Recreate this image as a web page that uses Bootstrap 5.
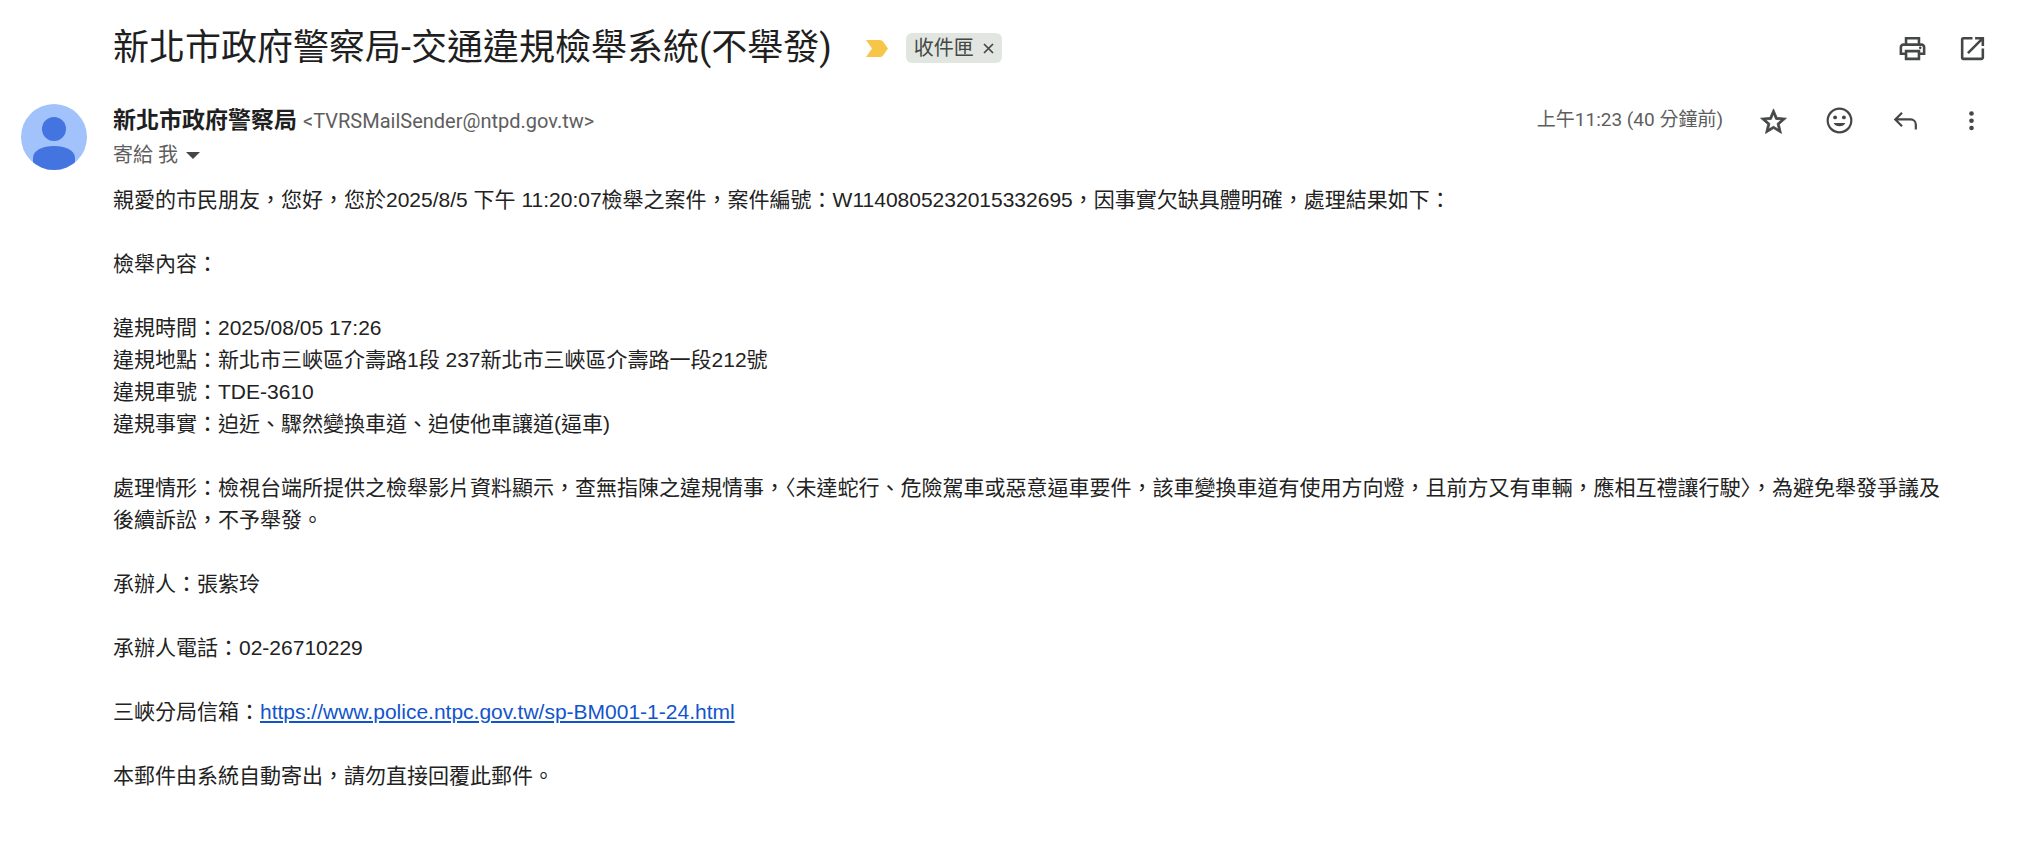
<!DOCTYPE html>
<html lang="zh-Hant">
<head>
<meta charset="utf-8">
<meta name="viewport" content="width=device-width, initial-scale=1">
<title>新北市政府警察局-交通違規檢舉系統(不舉發)</title>
<link href="https://cdn.jsdelivr.net/npm/bootstrap@5.3.0/dist/css/bootstrap.min.css" rel="stylesheet">
<style>
  body { color: #1f1f1f; background: #fff; font-family: Roboto, "Noto Sans CJK TC", sans-serif; }
  .subject-row { padding: 22px 35px 0 113px; }
  .subject { font-size: 36px; line-height: 52px; font-weight: 400; }
  .subject-labels { gap: 18px; margin-left: 34px; }
  .label-chip { background: #e1e6e0; color: #444746; border-radius: 6px; height: 30px; padding: 0 8px; gap: 9px; font-size: 20px; line-height: 30px; }
  .icon-btn { width: 32px; height: 32px; padding: 0; border: 0; color: #444746; display: flex; align-items: center; justify-content: center; }
  .icon-btn svg { width: 31px; height: 31px; fill: currentColor; }
  .subject-actions { gap: 28px; padding-top: 10px; }
  .meta-row { padding: 30px 36px 0 21px; gap: 26px; }
  .avatar { width: 66px; height: 66px; display: block; }
  .sender { font-size: 23px; line-height: 32px; font-weight: 700; }
  .sender-line { gap: 6px; }
  .muted-text { color: #5e5e5e; font-size: 20px; line-height: 34px; }
  .sent-time { font-size: 19px; }
  .meta-actions { gap: 34px; height: 32px; }
  .message { padding: 12px 64px 40px 113px; font: 21px/32px "Liberation Sans", "Noto Sans CJK TC", sans-serif; color: #222; }
  .message p { margin-bottom: 32px; }
  .message a { color: #15c; }
</style>
</head>
<body>
<main>
  <header class="subject-row d-flex align-items-start justify-content-between">
    <div class="d-flex align-items-center">
      <h1 class="subject mb-0">新北市政府警察局-交通違規檢舉系統(不舉發)</h1>
      <div class="subject-labels d-flex align-items-center">
        <svg width="22" height="17" viewBox="0 0 22 17" aria-hidden="true"><path fill="#f7c548" d="M0 0h14q2 0 3 1.500l5 7-5 7q-1 1.500-3 1.500H0l6-8.500z"/></svg>
        <span class="label-chip d-flex align-items-center">收件匣
          <button class="btn p-0 border-0 d-flex" aria-label="移除標籤"><svg width="11" height="11" viewBox="0 0 11 11" stroke="#444746" stroke-width="1.700"><path d="M1 1l9 9M10 1L1 10"/></svg></button>
        </span>
      </div>
    </div>
    <div class="subject-actions d-flex">
      <button class="btn icon-btn" aria-label="列印"><svg viewBox="0 0 24 24"><path d="M19 8h-1V3H6v5H5c-1.660 0-3 1.340-3 3v6h4v4h12v-4h4v-6c0-1.660-1.340-3-3-3zM8 5h8v3H8V5zm8 14H8v-4h8v4zm2-4v-2H6v2H4v-4c0-.55.45-1 1-1h14c.55 0 1 .45 1 1v4h-2z"/><circle cx="18" cy="11.500" r="1"/></svg></button>
      <button class="btn icon-btn" aria-label="在新視窗開啟"><svg viewBox="0 0 24 24"><path d="M19 19H5V5h7V3H5a2 2 0 0 0-2 2v14a2 2 0 0 0 2 2h14c1.100 0 2-.9 2-2v-7h-2v7zM14 3v2h3.590l-9.830 9.830 1.410 1.410L19 6.410V10h2V3h-7z"/></svg></button>
    </div>
  </header>

  <section class="meta-row d-flex align-items-start">
    <svg class="avatar flex-shrink-0" viewBox="0 0 66 66" role="img" aria-label="寄件者">
      <clipPath id="face"><circle cx="33" cy="33" r="33"/></clipPath>
      <circle cx="33" cy="33" r="33" fill="#a1c2fa"/>
      <circle cx="33" cy="25" r="12" fill="#4374e0"/>
      <path clip-path="url(#face)" fill="#4374e0" d="M12 66V54C12 46 22 42 33 42s21 4 21 12v12z"/>
    </svg>
    <div class="flex-grow-1">
      <div class="d-flex justify-content-between">
        <div class="sender-line d-flex align-items-center text-nowrap">
          <span class="sender">新北市政府警察局</span>
          <span class="muted-text">&lt;TVRSMailSender@ntpd.gov.tw&gt;</span>
        </div>
        <div class="meta-actions d-flex align-items-center">
          <time class="muted-text sent-time">上午11:23 (40 分鐘前)</time>
          <button class="btn icon-btn" aria-label="加星號"><svg viewBox="0 0 24 24"><path stroke="currentColor" stroke-width=".6" d="M22 10.240l-7.190-.62L12 3 9.190 9.630 2 10.240l5.460 4.730L5.820 22 12 18.270 18.180 22l-1.630-7.030L22 10.240zM12 16.400l-3.760 2.270 1-4.280-3.320-2.880 4.380-.38L12 7.100l1.710 4.040 4.380.38-3.320 2.880 1 4.280L12 16.400z"/></svg></button>
          <button class="btn icon-btn" aria-label="新增回應"><svg viewBox="0 0 24 24"><path d="M12 2a10 10 0 1 0 0 20 10 10 0 0 0 0-20zm0 18.300a8.300 8.300 0 1 1 0-16.600 8.300 8.300 0 0 1 0 16.600z"/><circle cx="8.600" cy="9.600" r="1.500"/><circle cx="15.400" cy="9.600" r="1.500"/><path d="M7.500 14h9c-.7 1.600-2.400 2.500-4.500 2.500s-3.800-.9-4.500-2.500z"/></svg></button>
          <button class="btn icon-btn" aria-label="回覆"><svg viewBox="0 0 24 24"><path fill="none" stroke="currentColor" stroke-width="1.700" d="M9.300 6L4.100 11.200l5.200 5.200M4.100 11.200H16a4 4 0 0 1 4 4V19"/></svg></button>
          <button class="btn icon-btn" aria-label="更多"><svg viewBox="0 0 24 24"><circle cx="12" cy="6.600" r="1.800"/><circle cx="12" cy="12.200" r="1.800"/><circle cx="12" cy="17.800" r="1.800"/></svg></button>
        </div>
      </div>
      <button class="btn border-0 p-0 d-flex align-items-center muted-text">寄給 我
        <svg class="ms-2" width="14" height="7" viewBox="0 0 14 7" aria-hidden="true"><path fill="#444746" d="M0 0h14L7 7z"/></svg>
      </button>
    </div>
  </section>

  <article class="message">
    <p>親愛的市民朋友，您好，您於2025/8/5 下午 11:20:07檢舉之案件，案件編號：W1140805232015332695，因事實欠缺具體明確，處理結果如下：</p>
    <p>檢舉內容：</p>
    <p>違規時間：2025/08/05 17:26<br>違規地點：新北市三峽區介壽路1段 237新北市三峽區介壽路一段212號<br>違規車號：TDE-3610<br>違規事實：迫近、驟然變換車道、迫使他車讓道(逼車)</p>
    <p>處理情形：檢視台端所提供之檢舉影片資料顯示，查無指陳之違規情事，〈未達蛇行、危險駕車或惡意逼車要件，該車變換車道有使用方向燈，且前方又有車輛，應相互禮讓行駛〉，為避免舉發爭議及後續訴訟，不予舉發。</p>
    <p>承辦人：張紫玲</p>
    <p>承辦人電話：02-26710229</p>
    <p>三峽分局信箱：<a href="https://www.police.ntpc.gov.tw/sp-BM001-1-24.html">https://www.police.ntpc.gov.tw/sp-BM001-1-24.html</a></p>
    <p class="mb-0">本郵件由系統自動寄出，請勿直接回覆此郵件。</p>
  </article>
</main>
<script src="https://cdn.jsdelivr.net/npm/bootstrap@5.3.0/dist/js/bootstrap.bundle.min.js"></script>
</body>
</html>
